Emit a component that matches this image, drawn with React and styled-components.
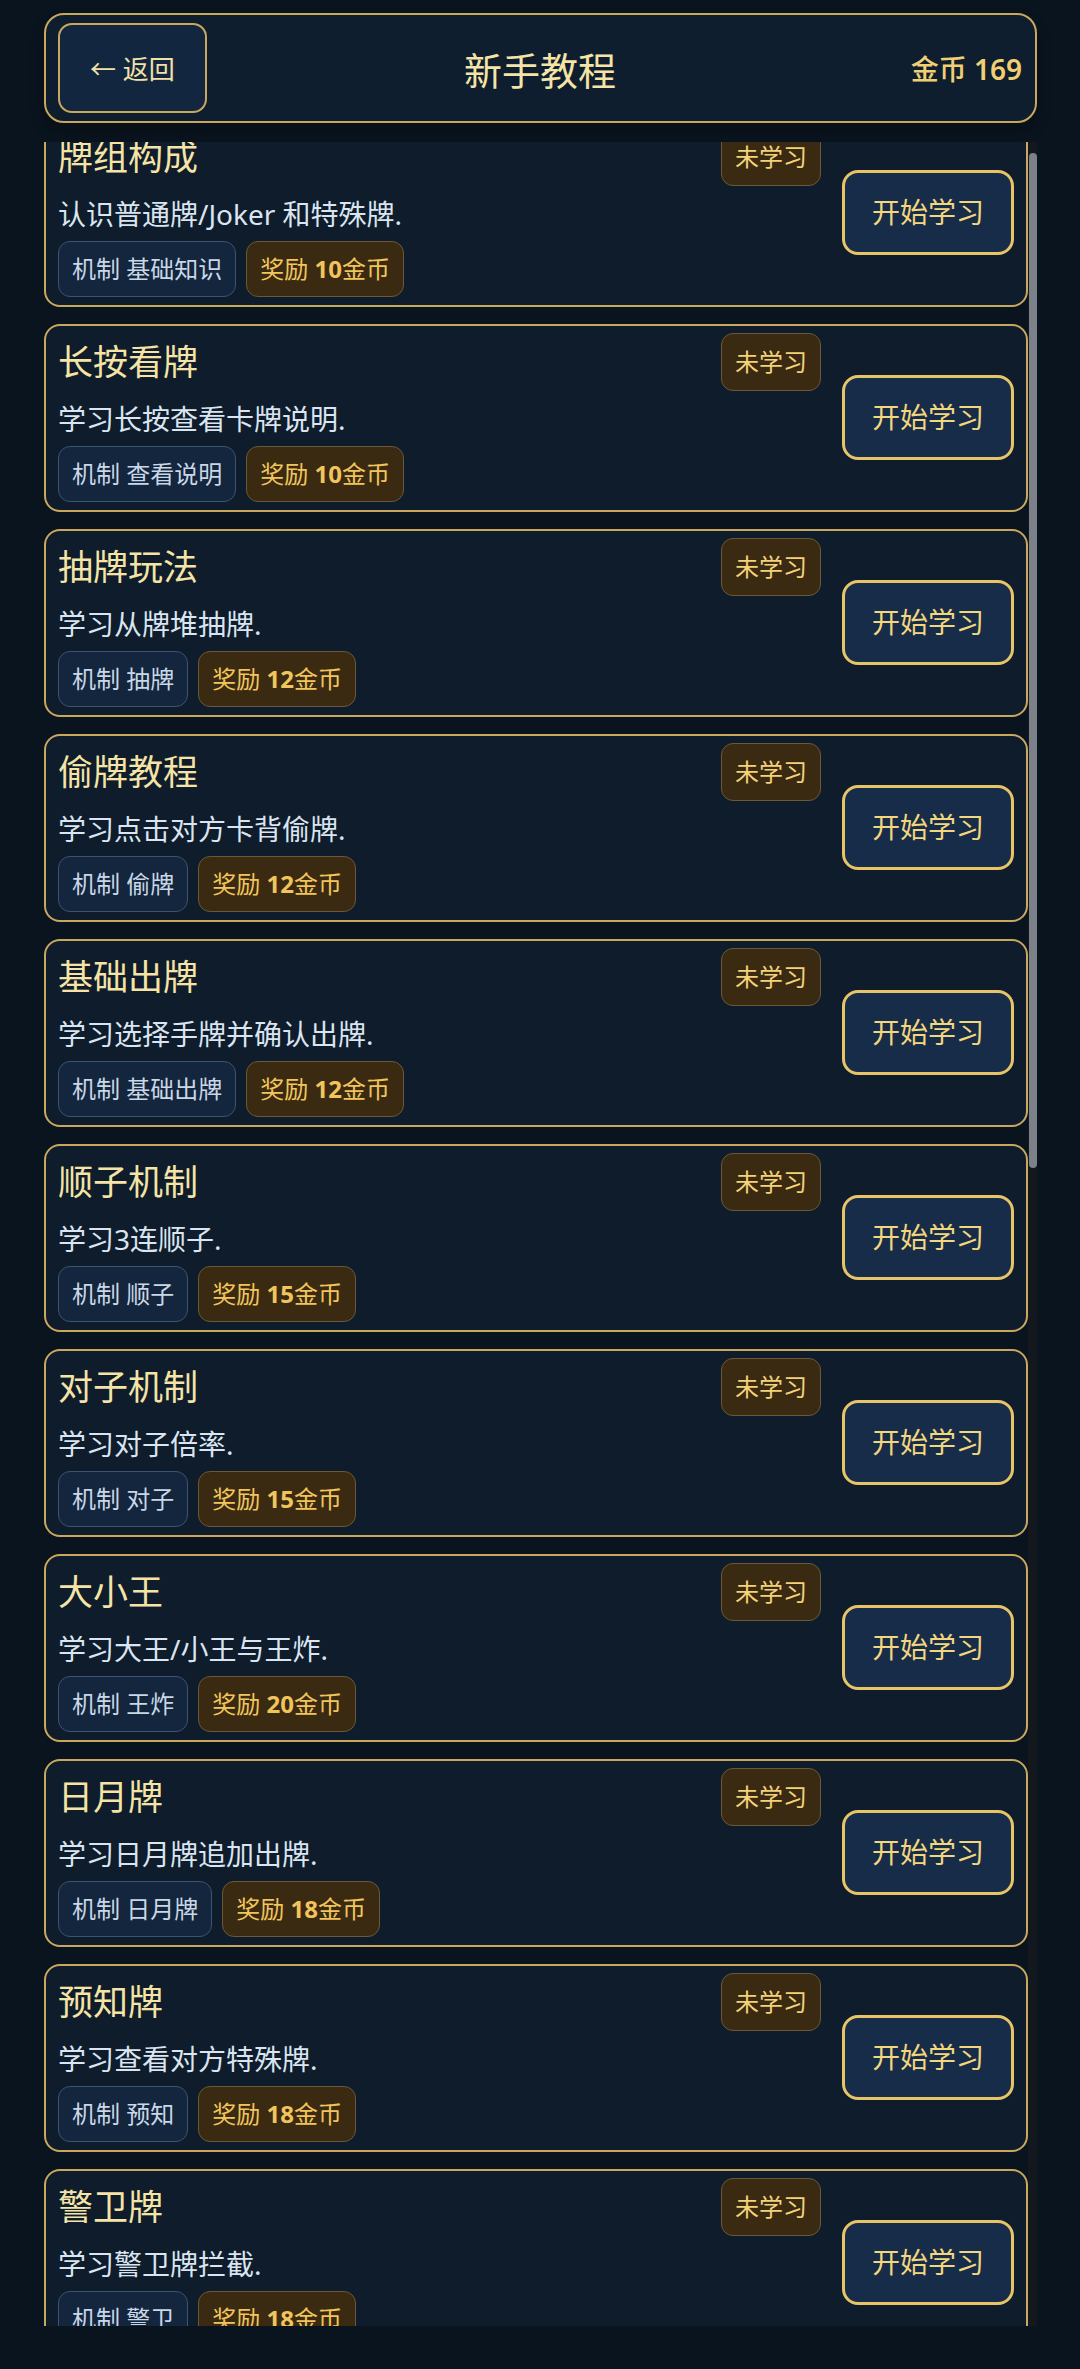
import React, { useLayoutEffect, useRef, useState } from "react";
import styled, { createGlobalStyle } from "styled-components";

const lessons = [
  { id: 1, title: "牌组构成", desc: "认识普通牌/Joker 和特殊牌.", tag: "基础知识", reward: 10 },
  { id: 2, title: "长按看牌", desc: "学习长按查看卡牌说明.", tag: "查看说明", reward: 10 },
  { id: 3, title: "抽牌玩法", desc: "学习从牌堆抽牌.", tag: "抽牌", reward: 12 },
  { id: 4, title: "偷牌教程", desc: "学习点击对方卡背偷牌.", tag: "偷牌", reward: 12 },
  { id: 5, title: "基础出牌", desc: "学习选择手牌并确认出牌.", tag: "基础出牌", reward: 12 },
  { id: 6, title: "顺子机制", desc: "学习3连顺子.", tag: "顺子", reward: 15 },
  { id: 7, title: "对子机制", desc: "学习对子倍率.", tag: "对子", reward: 15 },
  { id: 8, title: "大小王", desc: "学习大王/小王与王炸.", tag: "王炸", reward: 20 },
  { id: 9, title: "日月牌", desc: "学习日月牌追加出牌.", tag: "日月牌", reward: 18 },
  { id: 10, title: "预知牌", desc: "学习查看对方特殊牌.", tag: "预知", reward: 18 },
  { id: 11, title: "警卫牌", desc: "学习警卫牌拦截.", tag: "警卫", reward: 18 },
  { id: 12, title: "炸弹牌", desc: "学习四张炸弹压制.", tag: "炸弹", reward: 20 },
  { id: 13, title: "连对机制", desc: "学习连续对子出牌.", tag: "连对", reward: 18 },
  { id: 14, title: "飞机机制", desc: "学习三带组合飞机.", tag: "飞机", reward: 20 },
  { id: 15, title: "反弹牌", desc: "学习反弹对方效果.", tag: "反弹", reward: 18 },
  { id: 16, title: "交换牌", desc: "学习与对方交换手牌.", tag: "交换", reward: 18 },
  { id: 17, title: "冻结牌", desc: "学习冻结对方回合.", tag: "冻结", reward: 18 },
  { id: 18, title: "复制牌", desc: "学习复制上一张特殊牌.", tag: "复制", reward: 18 },
  { id: 19, title: "回合结算", desc: "学习回合结束与计分.", tag: "结算", reward: 15 },
  { id: 20, title: "积分倍率", desc: "学习倍率叠加规则.", tag: "倍率", reward: 15 },
  { id: 21, title: "对战模式", desc: "学习与玩家实时对战.", tag: "对战", reward: 20 },
  { id: 22, title: "排位赛", desc: "学习段位与排位奖励.", tag: "排位", reward: 20 },
  { id: 23, title: "每日任务", desc: "学习领取每日任务奖励.", tag: "任务", reward: 10 },
];

const GlobalStyle = createGlobalStyle`
  html, body {
    margin: 0;
    height: 100%;
    overflow: hidden;
    background: #0a141e;
  }
  body {
    font-family: "Noto Sans", "Noto Sans CJK SC", sans-serif;
  }
  #root {
    height: 100%;
  }
  * {
    box-sizing: border-box;
  }
`;

const Page = styled.div`
  height: 100vh;
  padding: 13px 43px 43px 44px;
  display: flex;
  flex-direction: column;
  gap: 19px;
`;

const Header = styled.header`
  flex: none;
  height: 110px;
  display: grid;
  grid-template-columns: 1fr auto 1fr;
  align-items: center;
  padding: 8px 13px 8px 12px;
  background: #0f1e2e;
  border: 2px solid #c9a75e;
  border-radius: 20px;
  box-shadow: 0 8px 14px rgba(0, 0, 0, 0.25);
`;

const BackButton = styled.button`
  justify-self: start;
  height: 100%;
  padding: 0 30px;
  font-family: inherit;
  font-size: 26px;
  color: #f3e2a8;
  background: #13263f;
  border: 2px solid #c9a75e;
  border-radius: 14px;
`;

const PageTitle = styled.h1`
  margin: 0;
  font-size: 38px;
  font-weight: 400;
  color: #f5e4a8;
`;

const Coins = styled.div`
  justify-self: end;
  font-size: 28px;
  font-weight: 500;
  color: #f1cf72;

  b {
    font-weight: 600;
  }
`;

const ListArea = styled.div`
  flex: 1;
  min-height: 0;
  display: flex;
`;

const Scroller = styled.div`
  flex: 1;
  min-width: 0;
  overflow-y: auto;
  display: grid;
  align-content: start;
  gap: 17px;
  scrollbar-width: none;

  &::-webkit-scrollbar {
    display: none;
  }
`;

const ScrollTrack = styled.div`
  flex: none;
  width: 9px;
  display: flex;
  flex-direction: column;
  align-items: center;
  background: #13181e;
`;

const ScrollThumb = styled.div`
  width: 8px;
  border-radius: 4px;
  background: #7c8088;
`;

const Card = styled.article`
  display: flex;
  align-items: center;
  gap: 21px;
  padding: 7px 12px 8px;
  background: #0e1c2b;
  border: 2px solid #c9a75e;
  border-radius: 16px;
`;

const Info = styled.div`
  flex: 1;
  min-width: 0;
  display: flex;
  flex-direction: column;
`;

const TitleRow = styled.div`
  display: flex;
  align-items: center;
  justify-content: space-between;
`;

const Title = styled.h2`
  margin: 0;
  font-size: 35px;
  line-height: 1.2;
  font-weight: 400;
  color: #f5e4a6;
`;

const Status = styled.span`
  font-size: 24px;
  line-height: 36px;
  padding: 10px 13px;
  color: #f3d27a;
  background: #3a2a12;
  border: 1px solid #6b5836;
  border-radius: 12px;
`;

const Desc = styled.p`
  margin: 8px 0 0;
  font-size: 28px;
  line-height: 40px;
  color: #dbe5f1;
`;

const Tags = styled.div`
  display: flex;
  gap: 10px;
  margin-top: 7px;
`;

const Tag = styled.span`
  font-size: 24px;
  line-height: 36px;
  padding: 9px 13px;
  border-radius: 12px;
  border: 1px solid ${(p) => (p.$reward ? "#6b5836" : "#3b5473")};
  background: ${(p) => (p.$reward ? "#3a2a12" : "#13263d")};
  color: ${(p) => (p.$reward ? "#f2c55c" : "#c9d7e7")};

  b {
    font-weight: 700;
  }
`;

const StartButton = styled.button`
  flex: none;
  padding: 19px 27px;
  font-family: inherit;
  font-size: 28px;
  line-height: 41px;
  color: #f3d77f;
  background: #172c48;
  border: 3px solid #e6c467;
  border-radius: 16px;
`;

function LessonCard({ lesson }) {
  return (
    <Card>
      <Info>
        <TitleRow>
          <Title>{lesson.title}</Title>
          <Status>未学习</Status>
        </TitleRow>
        <Desc>{lesson.desc}</Desc>
        <Tags>
          <Tag>机制 {lesson.tag}</Tag>
          <Tag $reward>
            奖励 <b>{lesson.reward}</b>金币
          </Tag>
        </Tags>
      </Info>
      <StartButton>开始学习</StartButton>
    </Card>
  );
}

export default function App() {
  const listRef = useRef(null);
  const [thumb, setThumb] = useState({ top: 0, height: 0 });

  // scrollbar is drawn by hand so it shows in any browser
  const measure = () => {
    const el = listRef.current;
    if (!el) return;
    const ratio = el.clientHeight / el.scrollHeight;
    setThumb({
      top: el.scrollTop * ratio,
      height: el.clientHeight * ratio,
    });
  };

  useLayoutEffect(() => {
    if (listRef.current) listRef.current.scrollTop = 23;
    measure();
  }, []);

  return (
    <Page>
      <GlobalStyle />
      <Header>
        <BackButton>← 返回</BackButton>
        <PageTitle>新手教程</PageTitle>
        <Coins>
          金币 <b>169</b>
        </Coins>
      </Header>
      <ListArea>
        <Scroller ref={listRef} onScroll={measure}>
          {lessons.map((l) => (
            <LessonCard key={l.id} lesson={l} />
          ))}
        </Scroller>
        <ScrollTrack>
          <ScrollThumb style={{ marginTop: thumb.top, height: thumb.height }} />
        </ScrollTrack>
      </ListArea>
    </Page>
  );
}
